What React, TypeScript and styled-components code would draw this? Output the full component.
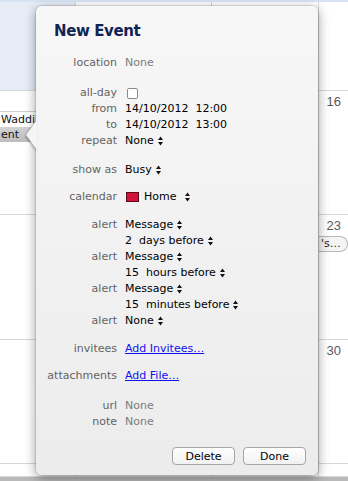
import { FC } from "react";
import styled, { createGlobalStyle } from "styled-components";

const Global = createGlobalStyle`
  html, body { margin: 0; padding: 0; background: #fff; }
  body { font-family: "DejaVu Sans", "Liberation Sans", sans-serif; }
`

const Screen = styled.div`
  position: relative;
  width: 348px;
  height: 481px;
  overflow: hidden;
  background: #fff;
`

const Grid = styled.div`
  display: grid;
  grid-template-columns: 76px 136px 107px 29px;
  grid-template-rows: 89px 124px 125px 124px 1fr;
  border-top: 2px solid #d6e3f3;
  box-sizing: border-box;
  height: 481px;
  border-bottom: 4px solid #b9b9b9;
`

const Cell = styled.div<{ $shade?: boolean; $last?: boolean }>`
  position: relative;
  box-sizing: border-box;
  border-right: ${({ $last }) => ($last ? "none" : "1px solid #d8d8d8")};
  border-bottom: 1px solid #d8d8d8;
  background: ${({ $shade }) => ($shade ? "#e6edf7" : "#fff")};
  overflow: hidden;
`

const DayNum = styled.div`
  font-family: "Liberation Sans", Arial, sans-serif;
  font-size: 13px;
  line-height: 15px;
  color: #5a5a5a;
  text-align: right;
  padding: 3px 7px 0 0;
`

const EventLine = styled.div<{ $selected?: boolean }>`
  height: 15px;
  line-height: 15px;
  font-size: 11px;
  color: #111;
  white-space: nowrap;
  padding-left: 1px;
  background: ${({ $selected }) => ($selected ? "linear-gradient(#d2d2d2, #bdbdbd)" : "#fff")};
  border-top: ${({ $selected }) => ($selected ? "none" : "1px solid #cfcfcf")};
`

const EventList = styled.div`
  margin-top: 20px;
`

const Chip = styled.div`
  margin-top: 3px;
  height: 14px;
  line-height: 14px;
  font-size: 11px;
  color: #222;
  border: 1px solid #b8b8b8;
  border-left: none;
  border-radius: 0 8px 8px 0;
  background: #f4f4f4;
  padding-left: 2px;
  white-space: nowrap;
`

const Popover = styled.div`
  position: absolute;
  left: 36px;
  top: 6px;
  width: 282px;
  height: 469px;
  box-sizing: border-box;
  border-radius: 6px;
  background: linear-gradient(#f7f7f7, #ececec);
  box-shadow: 0 3px 12px rgba(0, 0, 0, 0.4), 0 0 0 1px rgba(0, 0, 0, 0.1);
  padding-top: 16px;
  display: flex;
  flex-direction: column;
`

const Arrow = styled.svg`
  position: absolute;
  left: -11px;
  top: 114px;
  filter: drop-shadow(-1px 1px 1px rgba(0, 0, 0, 0.3));
`

const Title = styled.h1`
  margin: 0 0 0 18px;
  font-size: 15px;
  line-height: 18px;
  font-weight: bold;
  letter-spacing: -0.4px;
  color: #0f2452;
`

const Group = styled.div<{ $gap: number }>`
  margin-top: ${({ $gap }) => $gap}px;
  display: grid;
  grid-template-columns: 81px 1fr;
  column-gap: 8px;
  grid-auto-rows: 16px;
  font-size: 11px;
  line-height: 16px;
`

const Label = styled.div`
  text-align: right;
  color: #636363;
`

const Value = styled.div<{ $muted?: boolean }>`
  grid-column: 2;
  color: ${({ $muted }) => ($muted ? "#7c7c7c" : "#000")};
  display: flex;
  align-items: center;
  white-space: pre;
`

const Link = styled.a`
  color: #1010f0;
  text-decoration: underline;
  cursor: pointer;
`

const Check = styled.span`
  display: inline-block;
  width: 9px;
  height: 9px;
  margin-left: 2px;
  border: 1px solid #8a8a8a;
  border-radius: 2px;
  background: #fff;
`

const Swatch = styled.span`
  display: inline-block;
  width: 11px;
  height: 8px;
  margin: 0 5px 0 1px;
  background: #d3143a;
  border: 1px solid #5a0a18;
`

const Buttons = styled.div`
  margin-top: 17px;
  display: flex;
  justify-content: flex-end;
  gap: 8px;
  padding-right: 12px;
`

const Button = styled.button`
  width: 63px;
  height: 18px;
  padding: 0;
  font-family: "DejaVu Sans", sans-serif;
  font-size: 11px;
  color: #000;
  border: 1px solid #a6a6a6;
  border-radius: 4px;
  background: linear-gradient(#ffffff, #f1f1f1);
`

const Stepper: FC<{ gap?: number }> = ({ gap = 4 }) => (
  <svg width="5" height="10" viewBox="0 0 5 10" style={{ marginLeft: gap }}>
    <polygon points="2.5,0.5 5,4 0,4" fill="#111" />
    <polygon points="0,6 5,6 2.5,9.5" fill="#111" />
  </svg>
)

export default function App() {
  return (
    <Screen>
      <Global />
      <Grid>
        <Cell $shade />
        <Cell />
        <Cell />
        <Cell $last />
        <Cell>
          <EventList>
            <EventLine>Waddilove</EventLine>
            <EventLine $selected>ent</EventLine>
          </EventList>
        </Cell>
        <Cell />
        <Cell />
        <Cell $last>
          <DayNum>16</DayNum>
        </Cell>
        <Cell />
        <Cell />
        <Cell />
        <Cell $last>
          <DayNum>23</DayNum>
          <Chip>'s…</Chip>
        </Cell>
        <Cell />
        <Cell />
        <Cell />
        <Cell $last>
          <DayNum>30</DayNum>
        </Cell>
        <Cell />
        <Cell />
        <Cell />
        <Cell $last />
      </Grid>

      <Popover>
        <Arrow width="12" height="32" viewBox="0 0 12 32">
          <polygon points="12,0 1,15 12,30" fill="#f5f5f5" />
        </Arrow>
        <Title>New Event</Title>

        <Group $gap={15}>
          <Label>location</Label>
          <Value $muted>None</Value>
        </Group>

        <Group $gap={14}>
          <Label>all-day</Label>
          <Value><Check /></Value>
          <Label>from</Label>
          <Value>14/10/2012  12:00</Value>
          <Label>to</Label>
          <Value>14/10/2012  13:00</Value>
          <Label>repeat</Label>
          <Value>None<Stepper /></Value>
        </Group>

        <Group $gap={13}>
          <Label>show as</Label>
          <Value>Busy<Stepper /></Value>
        </Group>

        <Group $gap={11}>
          <Label>calendar</Label>
          <Value><Swatch />Home<Stepper gap={9} /></Value>
        </Group>

        <Group $gap={12}>
          <Label>alert</Label>
          <Value>Message<Stepper /></Value>
          <Value>2  days before<Stepper /></Value>
          <Label>alert</Label>
          <Value>Message<Stepper /></Value>
          <Value>15  hours before<Stepper /></Value>
          <Label>alert</Label>
          <Value>Message<Stepper /></Value>
          <Value>15  minutes before<Stepper /></Value>
          <Label>alert</Label>
          <Value>None<Stepper /></Value>
        </Group>

        <Group $gap={12}>
          <Label>invitees</Label>
          <Value><Link>Add Invitees…</Link></Value>
        </Group>

        <Group $gap={11}>
          <Label>attachments</Label>
          <Value><Link>Add File…</Link></Value>
        </Group>

        <Group $gap={14}>
          <Label>url</Label>
          <Value $muted>None</Value>
          <Label>note</Label>
          <Value $muted>None</Value>
        </Group>

        <Buttons>
          <Button>Delete</Button>
          <Button>Done</Button>
        </Buttons>
      </Popover>
    </Screen>
  );
}
